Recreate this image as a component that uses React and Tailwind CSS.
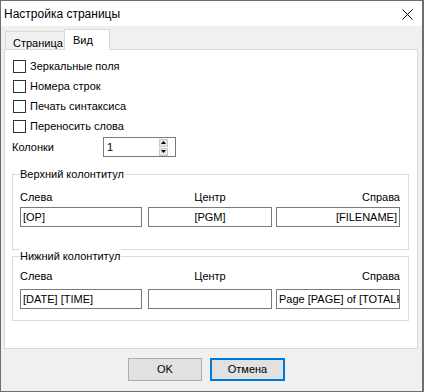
import React from "react";

function Check({ label }) {
  return (
    <div className="flex h-[20px] items-center ml-[1px]">
      <div className="w-[13px] h-[13px] border border-[#333333] bg-white" />
      <span className="ml-[4px] leading-[14px]">{label}</span>
    </div>
  );
}

function Field({ w, value, align = "left", className = "" }) {
  const a =
    align === "left" ? "justify-start pl-[2px]" : align === "center" ? "justify-center" : "justify-end pr-[2px]";
  return (
    <div
      className={`h-[20px] border border-[#7a7a7a] bg-white flex items-center overflow-hidden whitespace-nowrap ${a} ${className}`}
      style={{ width: w }}
    >
      <span className="leading-[14px]">{value}</span>
    </div>
  );
}

function Group({ title, pt, mt, pb, values, className = "" }) {
  return (
    <div className={`relative w-[397px] border border-[#dcdcdc] pl-[7px] ${className}`} style={{ paddingTop: pt, paddingBottom: pb }}>
      <span className="absolute left-[7px] top-[-8px] bg-white pr-[1px] leading-[14px]">{title}</span>
      <div className="flex w-[380px] h-[14px] leading-[14px]">
        <span className="w-[128px]">Слева</span>
        <span className="w-[124px] text-center">Центр</span>
        <span className="w-[128px] text-right">Справа</span>
      </div>
      <div className="flex" style={{ marginTop: mt }}>
        <Field w={122} value={values[0]} />
        <Field w={124} value={values[1]} align="center" className="ml-[6px]" />
        <Field w={124} value={values[2]} align={values[3] || "right"} className="ml-[4px]" />
      </div>
    </div>
  );
}

export default function App() {
  return (
    <div className="w-[424px] h-[392px] bg-[#f0f0f0] border border-r-2 border-[#6e6e6e] text-[11px] text-black font-['Liberation_Sans',Arial,sans-serif] overflow-hidden">
      <div className="h-[25px] bg-white flex items-center pl-[3px] pr-[9px]">
        <span className="text-[12px] flex-1">Настройка страницы</span>
        <svg width="11" height="11" viewBox="0 0 11 11" className="mt-[1px]">
          <path d="M0.5 0.5L10.5 10.5M10.5 0.5L0.5 10.5" stroke="#000" strokeWidth="1" />
        </svg>
      </div>
      <div className="ml-[3px]">
        <div className="h-[23px] flex items-end pl-[1px]">
          <div className="h-[18px] w-[59px] border-t border-l border-[#d9d9d9] bg-[#f0f0f0] pl-[7px] pt-[4px] leading-[14px]">
            Страница
          </div>
          <div className="relative z-10 h-[21px] w-[46px] mb-[-1px] border-t border-l border-r border-[#d9d9d9] bg-white pl-[8px] pt-[3px] leading-[14px]">
            Вид
          </div>
        </div>
        <div className="w-[414px] h-[300px] border border-[#d9d9d9] bg-white px-[7px] pt-[6px]">
          <Check label="Зеркальные поля" />
          <Check label="Номера строк" />
          <Check label="Печать синтаксиса" />
          <Check label="Переносить слова" />
          <div className="flex items-center h-[20px] mt-[1px]">
            <span className="w-[91px] leading-[14px]">Колонки</span>
            <div className="w-[73px] h-[20px] border border-[#7a7a7a] flex items-center pl-[3px]">
              <span className="flex-1 leading-[14px]">1</span>
              <div className="flex flex-col gap-[1px] mr-[7px]">
                <div className="w-[9px] h-[8px] bg-[#e6e6e6] border border-[#c8c8c8] flex items-center justify-center">
                  <svg width="5" height="3" viewBox="0 0 5 3"><path d="M0 3H5L2.5 0Z" fill="#000" /></svg>
                </div>
                <div className="w-[9px] h-[8px] bg-[#e6e6e6] border border-[#c8c8c8] flex items-center justify-center">
                  <svg width="5" height="3" viewBox="0 0 5 3"><path d="M0 0H5L2.5 3Z" fill="#000" /></svg>
                </div>
              </div>
            </div>
          </div>
          <Group
            title="Верхний колонтитул"
            className="mt-[17px]"
            pt={15}
            mt={3}
            pb={22}
            values={["[OP]", "[PGM]", "[FILENAME]"]}
          />
          <Group
            title="Нижний колонтитул"
            className="mt-[6px]"
            pt={12}
            mt={6}
            pb={11}
            values={["[DATE] [TIME]", "", "Page [PAGE] of [TOTALPAGES]", "left"]}
          />
        </div>
      </div>
      <div className="flex mt-[9px] pl-[127px]">
        <div className="w-[74px] h-[23px] bg-[#e1e1e1] border border-[#adadad] flex items-center justify-center">
          OK
        </div>
        <div className="w-[75px] h-[23px] ml-[8px] bg-[#e1e1e1] border-2 border-[#0078d7] flex items-center justify-center">
          Отмена
        </div>
      </div>
    </div>
  );
}
